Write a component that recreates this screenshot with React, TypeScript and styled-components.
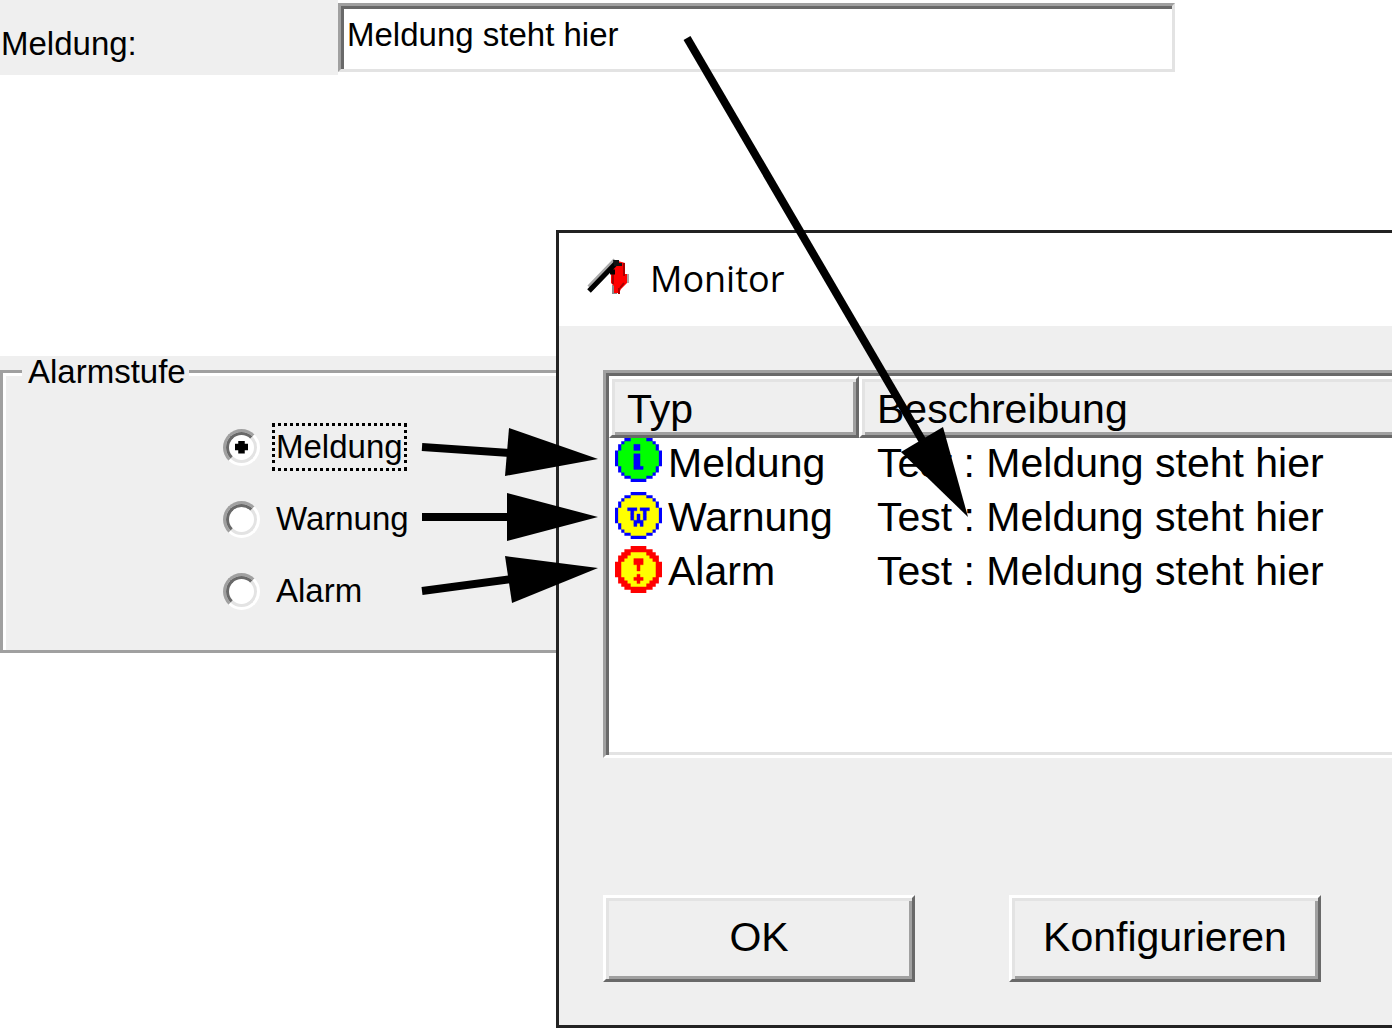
import React from 'react';
import styled, { createGlobalStyle, css } from 'styled-components';

const face = '#efefef';
const shade = '#a0a0a0';
const dark = '#696969';
const light = '#e3e3e3';

const GlobalStyle = createGlobalStyle`
  * { box-sizing: border-box; }
  body {
    margin: 0;
    background: #fff;
    color: #000;
    font-family: "Liberation Sans", Arial, sans-serif;
    overflow-x: hidden;
  }
`;

const raised = css`
  border: 3px solid;
  border-color: #fff ${dark} ${dark} #fff;
  box-shadow: inset 3px 3px 0 ${light}, inset -3px -3px 0 ${shade};
  background: ${face};
`;

const Page = styled.main`
  position: relative;
  font-size: 33px;
`;

const MessageBar = styled.div`
  display: flex;
  align-items: flex-start;
  margin-bottom: 155px;
`;

const MessageLabel = styled.label`
  flex: 0 0 338px;
  height: 75px;
  padding: 14px 0 0 1px;
  line-height: 60px;
  background: ${face};
`;

const MessageInput = styled.input`
  flex: 0 1 837px;
  min-width: 0;
  height: 69px;
  margin-top: 3px;
  padding: 0 6px 6px;
  border: 3px solid;
  border-color: ${shade} ${light} ${light} ${shade};
  border-radius: 0;
  box-shadow: inset 3px 3px 0 ${dark};
  background: #fff;
  color: #000;
  font: inherit;
  outline: none;
`;

const Columns = styled.div`
  display: grid;
  grid-template-columns: 556px minmax(0, 1fr);
  align-items: start;
`;

const LevelPanel = styled.div`
  margin-top: 126px;
  background: ${face};
`;

const LevelGroup = styled.fieldset`
  min-width: 0;
  height: 297px;
  margin: 0;
  padding: 24px 0 0 220px;
  border: 3px solid ${shade};
  border-right: 0;
  box-shadow: inset 3px 3px 0 #fff;
`;

const Legend = styled.legend`
  margin-left: -201px;
  padding: 0 3px 0 6px;
  line-height: 31px;
  background: ${face};
`;

const LevelRow = styled.label`
  display: flex;
  align-items: center;
  gap: 12px;
  height: 72px;
`;

const Radio = styled.input`
  appearance: none;
  position: relative;
  width: 37px;
  height: 37px;
  margin: 0;
  border: 3px solid;
  border-color: ${shade} #fff #fff ${shade};
  border-radius: 50%;
  background: #fff;
  outline: none;

  &::before {
    content: '';
    position: absolute;
    inset: 0;
    border: 3px solid;
    border-color: ${dark} ${light} ${light} ${dark};
    border-radius: 50%;
  }

  &:checked::after {
    content: '';
    position: absolute;
    inset: 9px;
    clip-path: polygon(
      25% 0, 75% 0, 75% 25%, 100% 25%, 100% 75%, 75% 75%,
      75% 100%, 25% 100%, 25% 75%, 0 75%, 0 25%, 25% 25%
    );
    background: #000;
  }
`;

const LevelText = styled.span<{ $focused?: boolean }>`
  height: 48px;
  padding: 0 1px;
  border: 3px dotted ${p => (p.$focused ? '#000' : 'transparent')};
  line-height: 42px;
`;

const Dialog = styled.section`
  border: 3px solid #222;
  border-right: 0;
  background: ${face};
`;

const TitleBar = styled.header`
  display: flex;
  align-items: center;
  gap: 19px;
  height: 93px;
  padding: 0 0 2px 28px;
  background: #fff;
`;

const Title = styled.h1`
  margin: 0;
  font: 400 36px "Open Sans", "Noto Sans", sans-serif;
`;

const DialogBody = styled.div`
  padding: 44px 0 43px 44px;
  font-size: 41px;
`;

const ListBox = styled.div`
  height: 388px;
  padding: 3px 0 3px 3px;
  border: 3px solid;
  border-color: ${shade} #fff #fff ${shade};
  border-right: 0;
  box-shadow: inset 3px 3px 0 ${dark}, inset 0 -3px 0 ${light};
  background: #fff;
  overflow: hidden;
`;

const Table = styled.table`
  width: 100%;
  table-layout: fixed;
  border-collapse: separate;
  border-spacing: 0;
`;

const HeadCell = styled.th<{ $last?: boolean }>`
  ${raised}
  width: ${p => (p.$last ? 'auto' : '250px')};
  height: 62px;
  padding: 3px 0 0 15px;
  line-height: 50px;
  font-weight: 400;
  text-align: left;
  ${p => p.$last && css`
    border-right: 0;
    box-shadow: inset 3px 3px 0 ${light}, inset 0 -3px 0 ${shade};
  `}
`;

const Cell = styled.td`
  height: 54px;
  padding: 0 0 0 18px;
  line-height: 50px;
  vertical-align: top;
  white-space: nowrap;
`;

const TypeCell = styled(Cell)`
  padding-left: 6px;
`;

const TypeContent = styled.div`
  display: flex;
  align-items: flex-start;
  gap: 6px;
`;

const Buttons = styled.div`
  display: flex;
  gap: 94px;
  margin-top: 137px;
`;

const Button = styled.button`
  ${raised}
  width: 312px;
  height: 87px;
  padding: 0 0 2px;
  color: #000;
  font: inherit;
`;

const Arrows = styled.svg`
  position: absolute;
  top: 0;
  left: 0;
  pointer-events: none;
`;

type Span = [row: number, from: number, to: number];

const disc: Span[] = [
  [0, 5, 9], [1, 3, 11], [2, 2, 12], [3, 1, 13], [4, 1, 13],
  [5, 0, 14], [6, 0, 14], [7, 0, 14], [8, 0, 14], [9, 0, 14],
  [10, 1, 13], [11, 1, 13], [12, 2, 12], [13, 3, 11], [14, 5, 9],
];
const thinInner: Span[] = [
  [1, 5, 9], [2, 3, 11], [3, 2, 12], [4, 2, 12],
  [5, 1, 13], [6, 1, 13], [7, 1, 13], [8, 1, 13], [9, 1, 13],
  [10, 2, 12], [11, 2, 12], [12, 3, 11], [13, 5, 9],
];
const thickInner: Span[] = [
  [2, 5, 9], [3, 4, 10], [4, 3, 11],
  [5, 2, 12], [6, 2, 12], [7, 2, 12], [8, 2, 12], [9, 2, 12],
  [10, 3, 11], [11, 4, 10], [12, 5, 9],
];

interface Level {
  name: string;
  ring: string;
  fill: string;
  inner: Span[];
  sign: Span[];
}

const levels: Level[] = [
  {
    name: 'Meldung', ring: '#00f', fill: '#0f0', inner: thinInner,
    sign: [[3, 6, 7], [4, 6, 7], [6, 6, 7], [7, 6, 7], [8, 6, 7], [9, 6, 7], [10, 6, 8]],
  },
  {
    name: 'Warnung', ring: '#00f', fill: '#ff0', inner: thinInner,
    sign: [[5, 4, 6], [5, 8, 10], [6, 5, 5], [6, 9, 9], [7, 5, 5], [7, 7, 7], [7, 9, 9],
      [8, 5, 5], [8, 7, 7], [8, 9, 9], [9, 6, 8], [10, 6, 6], [10, 8, 8]],
  },
  {
    name: 'Alarm', ring: '#f00', fill: '#ff0', inner: thickInner,
    sign: [[4, 6, 8], [5, 6, 8], [6, 7, 7], [7, 7, 7], [9, 7, 7], [10, 6, 8], [11, 7, 7]],
  },
];

const spans = (list: Span[]) =>
  list.map(([y, a, b]) => `M${a} ${y}H${b + 1}V${y + 1}H${a}Z`).join('');

function LevelIcon({ level, clipped }: { level: Level; clipped: boolean }) {
  return (
    <svg
      width="47"
      height={clipped ? 44 : 47}
      viewBox={clipped ? '0 1 15 14' : '0 0 15 15'}
      aria-hidden="true"
    >
      <path d={spans(disc)} fill={level.ring} />
      <path d={spans(level.inner)} fill={level.fill} />
      <path d={spans(level.sign)} fill={level.ring} stroke={level.ring} strokeWidth="0.1" />
    </svg>
  );
}

function Logo() {
  return (
    <svg width="44" height="44" viewBox="0 0 44 44" aria-hidden="true">
      <path d="M37 17h5v9h-5z" fill="#aaa" />
      <path d="M25 28h5v9h-5z" fill="#888" />
      <path d="M28 7l3-3 7 2v11h2v9l-6 6-2 4h-5v-7l-3-3V14z" fill="#f00" />
      <path d="M37 6v13M26 17v10M32 31v6M37 26l-4 5" stroke="#a80000" strokeWidth="2" fill="none" />
      <path d="M3 31L29 4" stroke="#aaa" strokeWidth="7" />
      <path d="M2 34L29 6M23 15h5" stroke="#000" strokeWidth="5" />
      <path d="M26 3h6v3h3v3h-8z" fill="#111" />
    </svg>
  );
}

export default function App() {
  return (
    <Page>
      <GlobalStyle />
      <MessageBar>
        <MessageLabel htmlFor="message">Meldung:</MessageLabel>
        <MessageInput id="message" type="text" defaultValue="Meldung steht hier" />
      </MessageBar>
      <Columns>
        <LevelPanel>
          <LevelGroup>
            <Legend>Alarmstufe</Legend>
            {levels.map((level, i) => (
              <LevelRow key={level.name}>
                <Radio type="radio" name="level" defaultChecked={i === 0} />
                <LevelText $focused={i === 0}>{level.name}</LevelText>
              </LevelRow>
            ))}
          </LevelGroup>
        </LevelPanel>
        <Dialog>
          <TitleBar>
            <Logo />
            <Title>Monitor</Title>
          </TitleBar>
          <DialogBody>
            <ListBox>
              <Table>
                <thead>
                  <tr>
                    <HeadCell>Typ</HeadCell>
                    <HeadCell $last>Beschreibung</HeadCell>
                  </tr>
                </thead>
                <tbody>
                  {levels.map((level, i) => (
                    <tr key={level.name}>
                      <TypeCell>
                        <TypeContent>
                          <LevelIcon level={level} clipped={i === 0} />
                          {level.name}
                        </TypeContent>
                      </TypeCell>
                      <Cell>Test : Meldung steht hier</Cell>
                    </tr>
                  ))}
                </tbody>
              </Table>
            </ListBox>
            <Buttons>
              <Button type="button">OK</Button>
              <Button type="button">Konfigurieren</Button>
            </Buttons>
          </DialogBody>
        </Dialog>
      </Columns>
      <Arrows width="1000" height="620" viewBox="0 0 1000 620" aria-hidden="true">
        <g stroke="#000" strokeWidth="8">
          <path d="M687 38L925 445" />
          <path d="M422 447L510 453" />
          <path d="M422 517H510" />
          <path d="M422 591L512 579" />
        </g>
        <path d="M968 517L943 427L901 452Z" />
        <path d="M598 459L509 428L505 476Z" />
        <path d="M598 517L507 493V541Z" />
        <path d="M598 568L505 556L512 603Z" />
      </Arrows>
    </Page>
  );
}
